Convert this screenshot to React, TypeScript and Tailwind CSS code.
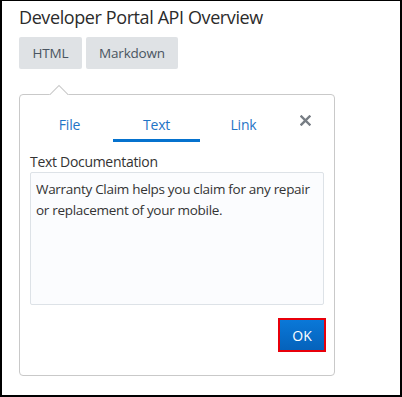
import React from 'react';

const tabs = ['File', 'Text', 'Link'];

export default function App() {
  return (
    <div className="w-[402px] h-[397px] bg-white border-black border-t border-l-2 border-r-2 border-b-2 font-['Open_Sans',sans-serif] text-[#333333] pl-[17px]">
      <h1 className="mt-[3px] text-[18px] leading-[26px] font-normal tracking-[-0.4px] text-[#2b2b2b]">Developer Portal API Overview</h1>

      <div className="mt-[7px] flex gap-[4px]">
        <button type="button" className="w-[63px] h-[32px] rounded-[2px] bg-[#dfe2e5] text-[13.5px] tracking-[-0.2px] text-[#4a5561]">
          HTML
        </button>
        <button type="button" className="w-[92px] h-[32px] rounded-[2px] bg-[#dfe2e5] text-[13.5px] tracking-[-0.2px] text-[#4a5561]">
          Markdown
        </button>
      </div>

      {/* popover */}
      <div className="relative mt-[25px] w-[316px] h-[282px] border border-[#c9c9c9] rounded-[4px] bg-white">
        <div className="absolute left-[24px] top-[-15px] w-[30px] h-[15px] overflow-hidden">
          <div className="w-[20px] h-[20px] bg-white border border-[#c9c9c9] rotate-45 translate-x-[5px] translate-y-[9px]" />
        </div>

        <div className="relative flex pl-[6px] pt-[11px]">
          {tabs.map((t) => (
            <div
              key={t}
              className={
                'w-[87px] h-[36px] flex items-center justify-center text-[14px] tracking-[-0.2px] text-[#1f74c6] ' +
                (t === 'Text' ? 'border-b-[3px] border-[#0572ce] pt-[3px]' : '')
              }
            >
              {t}
            </div>
          ))}
          <svg className="absolute left-[280px] top-[20px]" width="11" height="11" viewBox="0 0 11 11">
            <path d="M1.5 1.5 L9.5 9.5 M9.5 1.5 L1.5 9.5" stroke="#777d84" strokeWidth="2.4" strokeLinecap="square" />
          </svg>
        </div>

        <div className="px-[10px]">
          <div className="mt-[10px] text-[14px] leading-[20px] tracking-[-0.3px] text-[#333333]">Text Documentation</div>
          <div className="h-[133px] border border-[#dde2e7] rounded-[2px] bg-[#fbfcfe] pl-[5px] pr-[1px] py-[6px] text-[13.5px] leading-[21px] tracking-[-0.3px] text-[#333333]">
            Warranty Claim helps you claim for any repair or replacement of your mobile.
          </div>
          <div className="flex justify-end mt-[13px]">
            <div className="mr-[-2px] border-2 border-[#e8000b]">
              <button type="button" className="w-[44px] h-[30px] bg-gradient-to-b from-[#0a78d8] to-[#0562bb] text-white text-[14px]">
                OK
              </button>
            </div>
          </div>
        </div>
      </div>
    </div>
  );
}
